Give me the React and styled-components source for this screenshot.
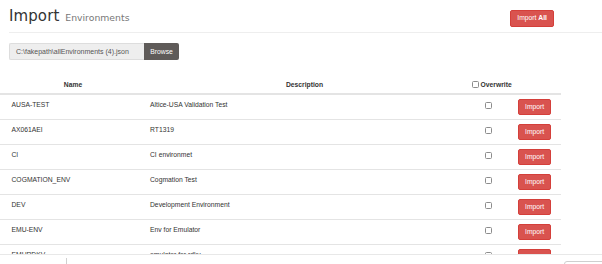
import React from "react";
import styled, { createGlobalStyle } from "styled-components";

const GlobalStyle = createGlobalStyle`
    html, body {
        margin: 0;
        padding: 0;
        height: 100%;
        overflow: hidden;
        background: #ffffff;
        font-family: "Liberation Sans", Arial, sans-serif;
        color: #333333;
    }
`;

const environments = [
    { name: "AUSA-TEST", description: "Altice-USA Validation Test" },
    { name: "AX061AEI", description: "RT1319" },
    { name: "CI", description: "CI environmet" },
    { name: "COGMATION_ENV", description: "Cogmation Test" },
    { name: "DEV", description: "Development Environment" },
    { name: "EMU-ENV", description: "Env for Emulator" },
    { name: "EMURDKV", description: "emulator for rdkv" },
];

const Page = styled.div`
    width: 602px;
`;

const Header = styled.div`
    display: flex;
    justify-content: space-between;
    align-items: flex-start;
    margin-left: 9px;
    padding: 5px 48px 3px 0;
    border-bottom: 1px solid #eeeeee;
`;

const Title = styled.h1`
    margin: 0;
    font-family: "DejaVu Sans", sans-serif;
    font-weight: normal;
    font-size: 15px;
    line-height: 22px;
    color: #333333;
    letter-spacing: 0.1px;
`;

const SubTitle = styled.small`
    font-size: 9.3px;
    color: #777777;
    margin-left: 1px;
    letter-spacing: 0;
`;

const RedButton = styled.button`
    display: block;
    font-family: "Liberation Sans", Arial, sans-serif;
    font-size: 6.75px;
    line-height: 1;
    color: #ffffff;
    background: #d9534f;
    border: 1px solid #d43f3a;
    border-radius: 2px;
    padding: 0 ${(p) => p.$padX}px;
    height: ${(p) => p.$height}px;
    margin-top: ${(p) => p.$top || 0}px;
    cursor: pointer;

    b {
        font-weight: bold;
    }
`;

const FileRow = styled.div`
    display: flex;
    margin: 10px 0 0 9px;
    height: 17px;
`;

const FileName = styled.div`
    width: 135px;
    box-sizing: border-box;
    background: #eeeeee;
    border: 1px solid #dddddd;
    border-right: none;
    border-radius: 2px 0 0 2px;
    font-size: 7px;
    line-height: 15px;
    padding-left: 6px;
    color: #555555;
`;

const BrowseButton = styled.div`
    width: 35px;
    background: #5f5b59;
    color: #ffffff;
    font-size: 6.8px;
    line-height: 17px;
    text-align: center;
    border-radius: 0 2px 2px 0;
`;

const Table = styled.div`
    width: 561px;
    margin-top: 15px;
    font-size: 6.75px;
`;

const Row = styled.div`
    display: grid;
    grid-template-columns: 146px 317px 50px 48px;
    border-bottom: ${(p) => (p.$head ? "2px" : "1px")} solid #e4e4e4;
`;

const HeadCell = styled.div`
    font-weight: bold;
    line-height: 11px;
    padding: 4px 0 3px ${(p) => p.$left || 0}px;
    display: flex;
    align-items: center;
    justify-content: ${(p) => (p.$align === "left" ? "flex-start" : "center")};
    gap: 2px;
`;

const Cell = styled.div`
    line-height: 11px;
    padding: 4px 0 4px ${(p) => p.$left || 0}px;
    color: #333333;
`;

const Check = styled.input.attrs({ type: "checkbox" })`
    appearance: none;
    margin: ${(p) => p.$top || 0}px 0 0 0;
    width: 6.5px;
    height: 6.5px;
    border: 1px solid #8c8c8c;
    border-radius: 1.5px;
    background: #ffffff;
    box-sizing: border-box;
    display: block;
`;

const Footer = styled.div`
    position: fixed;
    left: 0;
    right: 0;
    bottom: 0;
    height: 9px;
    background: #ffffff;
    border-top: 1px solid #e8e8e8;
`;

const Tick = styled.div`
    position: absolute;
    left: 66px;
    top: 3px;
    width: 1px;
    height: 6px;
    background: #d0d0d0;
`;

const CornerBox = styled.div`
    position: absolute;
    left: 564px;
    right: -4px;
    top: 6px;
    height: 10px;
    border: 1px solid #cfcfcf;
    border-radius: 3px;
`;

function App() {
    return (
        <Page>
            <GlobalStyle />
            <Header>
                <Title>
                    Import <SubTitle>Environments</SubTitle>
                </Title>
                <RedButton $padX={6} $height={17} $top={5}>
                    Import <b>All</b>
                </RedButton>
            </Header>
            <FileRow>
                <FileName>C:\fakepath\allEnvironments (4).json</FileName>
                <BrowseButton>Browse</BrowseButton>
            </FileRow>
            <Table>
                <Row $head>
                    <HeadCell>Name</HeadCell>
                    <HeadCell>Description</HeadCell>
                    <HeadCell $align="left" $left={9}>
                        <Check />
                        Overwrite
                    </HeadCell>
                    <HeadCell />
                </Row>
                {environments.map(({ name, description }) => (
                    <Row key={name}>
                        <Cell $left={11.5}>{name}</Cell>
                        <Cell $left={4}>{description}</Cell>
                        <Cell $left={22}>
                            <Check $top={3} />
                        </Cell>
                        <Cell $left={5}>
                            <RedButton $padX={6} $height={16}>Import</RedButton>
                        </Cell>
                    </Row>
                ))}
            </Table>
            <Footer>
                <Tick />
                <CornerBox />
            </Footer>
        </Page>
    );
}

export default App;
